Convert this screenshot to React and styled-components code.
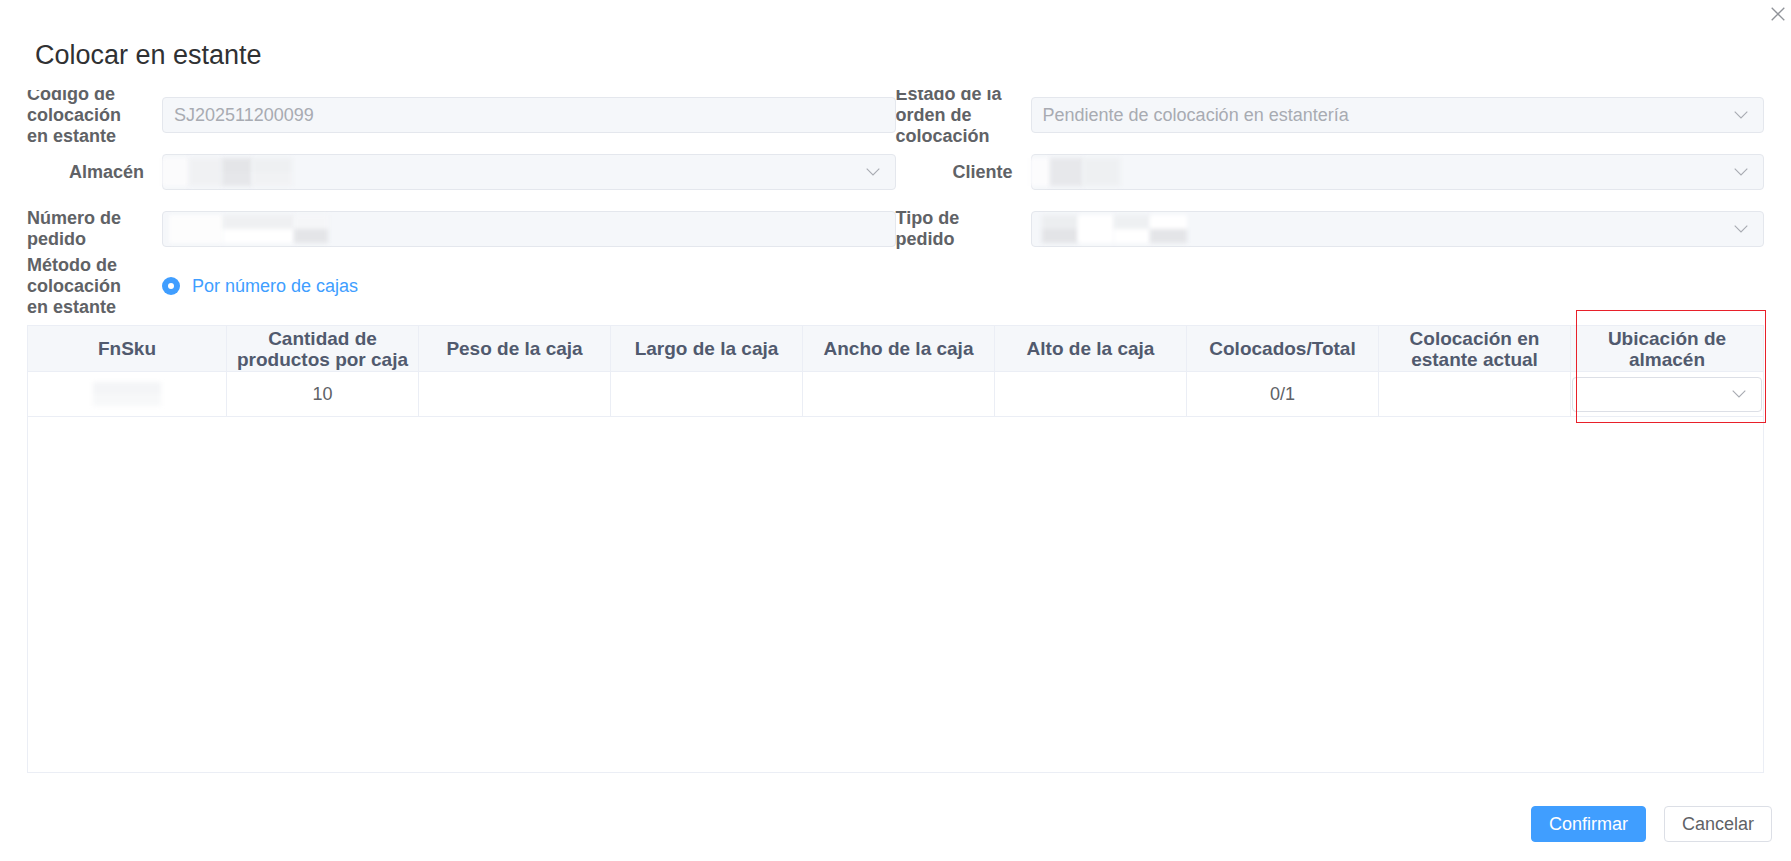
import React from 'react';
import styled, { createGlobalStyle } from 'styled-components';

const GlobalStyle = createGlobalStyle`
  html, body {
    margin: 0;
    padding: 0;
    background: #fff;
  }
  body {
    font-family: "Liberation Sans", Arial, sans-serif;
  }
  * {
    box-sizing: border-box;
  }
`

const Dialog = styled.div`
  position: relative;
  width: 1791px;
  height: 861px;
  background: #fff;
  display: flex;
  flex-direction: column;
`
const Header = styled.div`
  flex-shrink: 0;
  height: 90px;
  padding: 40px 35px 0;
`
const Title = styled.h2`
  margin: 0;
  font-size: 27px;
  line-height: 31px;
  font-weight: normal;
  color: #303133;
`
const CloseButton = styled.button`
  position: absolute;
  top: 7px;
  right: 6px;
  width: 14px;
  height: 14px;
  padding: 0;
  border: 0;
  background: none;
  display: flex;
  svg { display: block; }
`
// body clips the overflowing first-row labels, as in the dialog
const Body = styled.div`
  overflow: hidden;
  padding: 7px 27px 0;
`
const FormGrid = styled.div`
  display: grid;
  grid-template-columns: 1fr 1fr;
  row-gap: 21px;
`
const FormItem = styled.div`
  display: flex;
  height: 36px;
`
const Label = styled.label`
  flex-shrink: 0;
  width: 135px;
  height: 36px;
  padding-right: 18px;
  display: flex;
  justify-content: flex-end;
  align-items: center;
  font-size: 18px;
  line-height: 21px;
  font-weight: bold;
  color: #606266;
`
const Control = styled.div`
  flex: 1;
  min-width: 0;
  display: flex;
  align-items: center;
`
const Field = styled.div`
  position: relative;
  width: 100%;
  height: ${p => p.$h || 36}px;
  display: flex;
  align-items: center;
  padding: 0 11px;
  border: 1px solid ${p => (p.$plain ? '#dcdfe6' : '#e4e7ed')};
  border-radius: 4px;
  background: ${p => (p.$plain ? '#fff' : '#f5f7fa')};
  font-size: 18px;
  color: #a8abb2;
  white-space: nowrap;
`
const FieldText = styled.span`
  flex: 1;
  overflow: hidden;
`
const Arrow = styled.svg`
  flex-shrink: 0;
  margin-right: 4px;
`
const Smudges = styled.span`
  flex: 1;
  display: flex;
  align-items: center;
  margin-left: ${p => p.$offset || 0}px;
  height: 100%;
`
const Smudge = styled.span`
  flex-shrink: 0;
  width: ${p => p.$w}px;
  height: ${p => p.$hh || 28}px;
  background: linear-gradient(${p => p.$top}, ${p => p.$top} 50%, ${p => p.$bottom} 50%);
  filter: blur(2px);
`
const RadioOption = styled.div`
  display: flex;
  align-items: center;
  gap: 12px;
  font-size: 18px;
  color: #409eff;
`
const RadioDot = styled.span`
  position: relative;
  width: 18px;
  height: 18px;
  border-radius: 50%;
  background: #409eff;
  &::after {
    content: '';
    position: absolute;
    left: 6px;
    top: 6px;
    width: 6px;
    height: 6px;
    border-radius: 50%;
    background: #fff;
  }
`
const Table = styled.div`
  margin-top: 21px;
  height: 448px;
  border: 1px solid #ebeef5;
  display: flex;
  flex-direction: column;
`
const Row = styled.div`
  display: grid;
  grid-template-columns: 199px repeat(8, 1fr);
  background: ${p => (p.$head ? '#f5f7fa' : '#fff')};
`
const Cell = styled.div`
  height: ${p => (p.$head ? 46 : 45)}px;
  display: flex;
  align-items: center;
  justify-content: center;
  text-align: center;
  padding: ${p => (p.$tight ? '0 1px' : '0 8px')};
  border-right: 1px solid #ebeef5;
  border-bottom: 1px solid #ebeef5;
  font-size: ${p => (p.$head ? 19 : 18)}px;
  line-height: 21px;
  font-weight: ${p => (p.$head ? 'bold' : 'normal')};
  color: ${p => (p.$head ? '#515a6e' : '#606266')};
  &:last-child {
    border-right: 0;
  }
`
const Footer = styled.div`
  display: flex;
  justify-content: flex-end;
  gap: 18px;
  padding: 33px 19px 0;
`
const Button = styled.button`
  height: 36px;
  padding: 0 17px;
  border-radius: 4px;
  font-family: inherit;
  font-size: 18px;
  border: 1px solid ${p => (p.$primary ? '#409eff' : '#dcdfe6')};
  background: ${p => (p.$primary ? '#409eff' : '#fff')};
  color: ${p => (p.$primary ? '#fff' : '#606266')};
`
const Highlight = styled.div`
  position: absolute;
  left: 1576px;
  top: 310px;
  width: 190px;
  height: 113px;
  border: 1px solid #e8202a;
  pointer-events: none;
`

const Chevron = () => (
  <Arrow width="14" height="8" viewBox="0 0 14 8">
    <path d="M0.7 0.7L7 7L13.3 0.7" fill="none" stroke="#a8abb2" strokeWidth="1.1" />
  </Arrow>
)

const blurs = {
  almacen: { offset: -12, parts: [[27, '#fbfbfc', '#fbfbfc'], [33, '#f0f1f3', '#f0f1f3'], [30, '#e4e5e8', '#e6e7ea'], [40, '#eef0f2', '#f1f2f4']] },
  pedido: { offset: -5, parts: [[54, '#fdfdfd', '#fdfdfd'], [71, '#eff0f2', '#ffffff'], [34, '#f5f6f8', '#e4e5e8']] },
  cliente: { offset: -13, parts: [[20, '#fcfcfd', '#fcfcfd'], [33, '#e7e8eb', '#e7e8eb'], [37, '#eef0f2', '#eef0f2']] },
  tipo: { offset: -1, parts: [[36, '#eceef0', '#e3e4e7'], [36, '#ffffff', '#ffffff'], [36, '#eef0f2', '#ffffff'], [37, '#ffffff', '#e4e5e8']] },
}

const Blur = ({ kind }) => (
  <Smudges $offset={blurs[kind].offset}>
    {blurs[kind].parts.map(([w, top, bottom], i) => (
      <Smudge key={i} $w={w} $top={top} $bottom={bottom} />
    ))}
  </Smudges>
)

const columns = [
  'FnSku',
  'Cantidad de productos por caja',
  'Peso de la caja',
  'Largo de la caja',
  'Ancho de la caja',
  'Alto de la caja',
  'Colocados/Total',
  'Colocación en estante actual',
  'Ubicación de almacén',
]

const App = () => {
  return (
    <>
      <GlobalStyle />
      <Dialog>
        <Header>
          <Title>Colocar en estante</Title>
        </Header>
        <CloseButton aria-label="Cerrar">
          <svg width="14" height="14" viewBox="0 0 14 14">
            <path d="M0.7 0.7L13.3 13.3M13.3 0.7L0.7 13.3" stroke="#909399" strokeWidth="1.3" fill="none" />
          </svg>
        </CloseButton>
        <Body>
          <FormGrid>
            <FormItem>
              <Label>Código de colocación en estante</Label>
              <Control>
                <Field><FieldText>SJ202511200099</FieldText></Field>
              </Control>
            </FormItem>
            <FormItem>
              <Label>Estado de la orden de colocación</Label>
              <Control>
                <Field><FieldText>Pendiente de colocación en estantería</FieldText><Chevron /></Field>
              </Control>
            </FormItem>
            <FormItem>
              <Label>Almacén</Label>
              <Control>
                <Field><Blur kind="almacen" /><Chevron /></Field>
              </Control>
            </FormItem>
            <FormItem>
              <Label>Cliente</Label>
              <Control>
                <Field><Blur kind="cliente" /><Chevron /></Field>
              </Control>
            </FormItem>
            <FormItem>
              <Label>Número de pedido</Label>
              <Control>
                <Field><Blur kind="pedido" /></Field>
              </Control>
            </FormItem>
            <FormItem>
              <Label>Tipo de pedido</Label>
              <Control>
                <Field><Blur kind="tipo" /><Chevron /></Field>
              </Control>
            </FormItem>
            <FormItem>
              <Label>Método de colocación en estante</Label>
              <Control>
                <RadioOption>
                  <RadioDot />
                  Por número de cajas
                </RadioOption>
              </Control>
            </FormItem>
          </FormGrid>

          <Table>
            <Row $head>
              {columns.map(c => (
                <Cell $head key={c}>{c}</Cell>
              ))}
            </Row>
            <Row>
              <Cell>
                <Smudge $w={68} $hh={24} $top="#f4f5f7" $bottom="#f7f8f9" />
              </Cell>
              <Cell>10</Cell>
              <Cell />
              <Cell />
              <Cell />
              <Cell />
              <Cell>0/1</Cell>
              <Cell />
              <Cell $tight>
                <Field $plain $h={35}><FieldText /><Chevron /></Field>
              </Cell>
            </Row>
          </Table>
        </Body>
        <Footer>
          <Button $primary>Confirmar</Button>
          <Button>Cancelar</Button>
        </Footer>
        <Highlight />
      </Dialog>
    </>
  )
}
export default App;
